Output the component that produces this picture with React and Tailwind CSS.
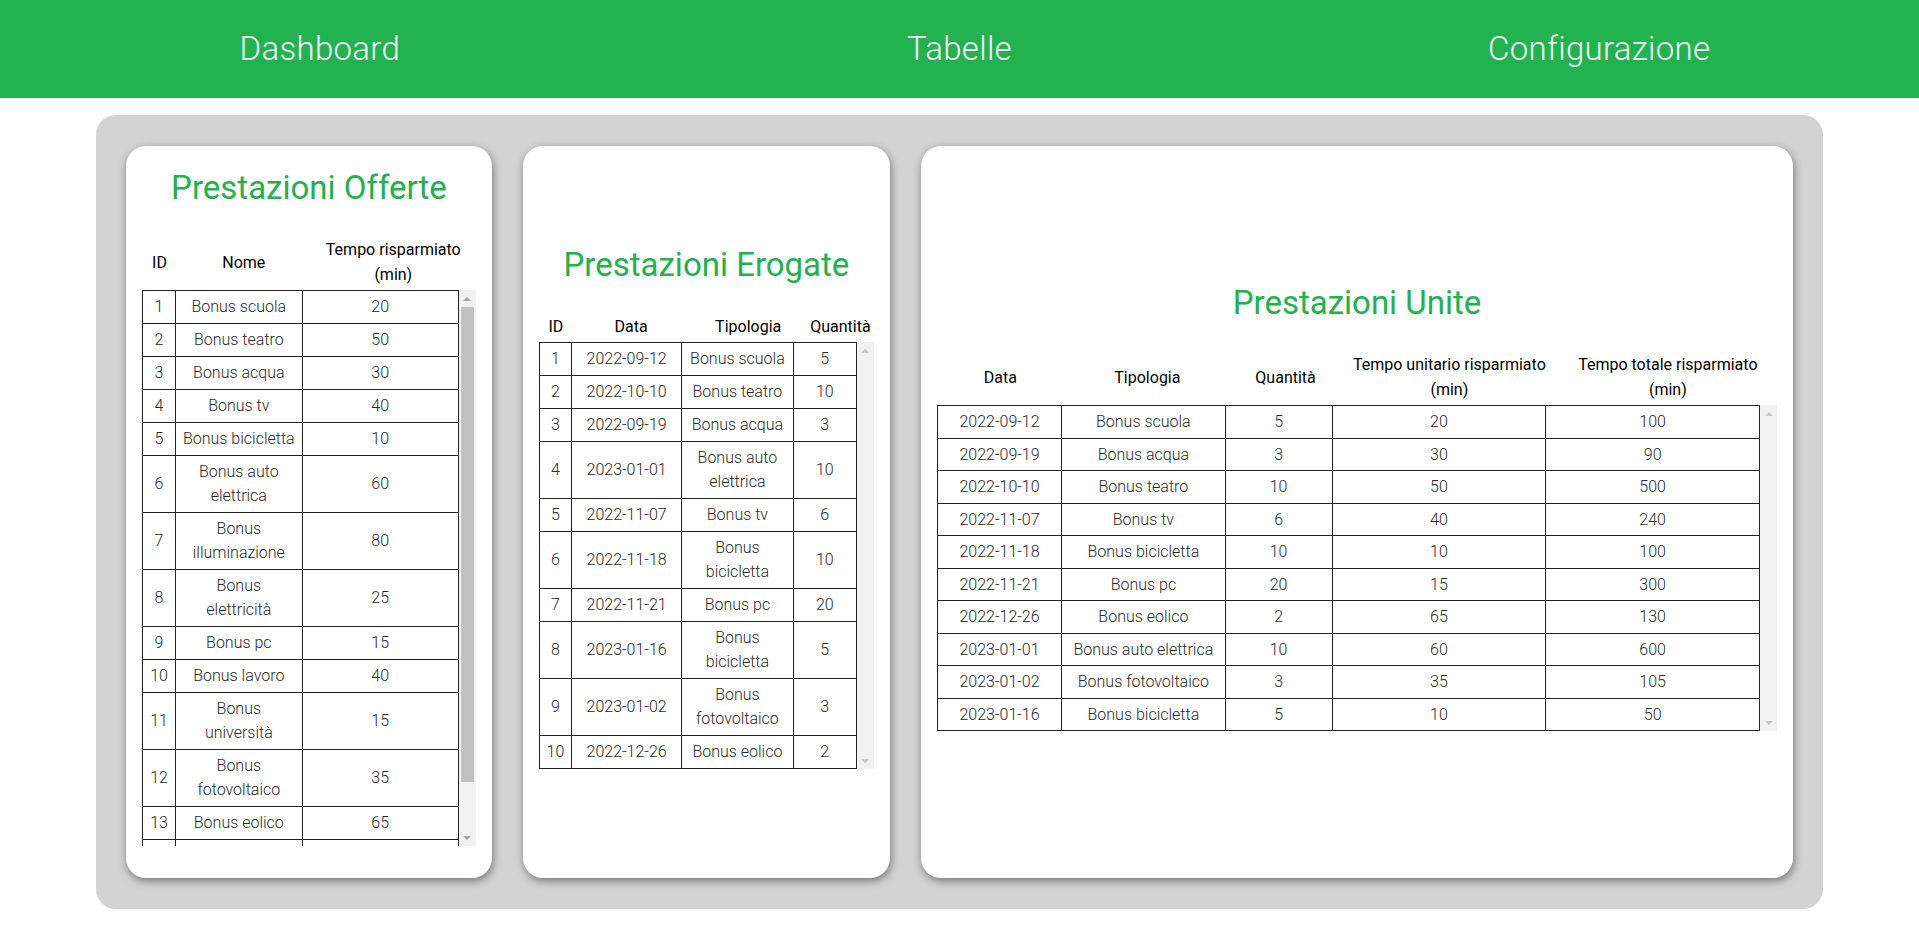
import React from "react";

const offerte = [
  [1, "Bonus scuola", 20],
  [2, "Bonus teatro", 50],
  [3, "Bonus acqua", 30],
  [4, "Bonus tv", 40],
  [5, "Bonus bicicletta", 10],
  [6, "Bonus auto\nelettrica", 60],
  [7, "Bonus\nilluminazione", 80],
  [8, "Bonus\nelettricità", 25],
  [9, "Bonus pc", 15],
  [10, "Bonus lavoro", 40],
  [11, "Bonus\nuniversità", 15],
  [12, "Bonus\nfotovoltaico", 35],
  [13, "Bonus eolico", 65],
  ["\u00a0", "\u00a0", "\u00a0"],
];

const erogate = [
  [1, "2022-09-12", "Bonus scuola", 5],
  [2, "2022-10-10", "Bonus teatro", 10],
  [3, "2022-09-19", "Bonus acqua", 3],
  [4, "2023-01-01", "Bonus auto\nelettrica", 10],
  [5, "2022-11-07", "Bonus tv", 6],
  [6, "2022-11-18", "Bonus\nbicicletta", 10],
  [7, "2022-11-21", "Bonus pc", 20],
  [8, "2023-01-16", "Bonus\nbicicletta", 5],
  [9, "2023-01-02", "Bonus\nfotovoltaico", 3],
  [10, "2022-12-26", "Bonus eolico", 2],
];

const unite = [
  ["2022-09-12", "Bonus scuola", 5, 20, 100],
  ["2022-09-19", "Bonus acqua", 3, 30, 90],
  ["2022-10-10", "Bonus teatro", 10, 50, 500],
  ["2022-11-07", "Bonus tv", 6, 40, 240],
  ["2022-11-18", "Bonus bicicletta", 10, 10, 100],
  ["2022-11-21", "Bonus pc", 20, 15, 300],
  ["2022-12-26", "Bonus eolico", 2, 65, 130],
  ["2023-01-01", "Bonus auto elettrica", 10, 60, 600],
  ["2023-01-02", "Bonus fotovoltaico", 3, 35, 105],
  ["2023-01-16", "Bonus bicicletta", 5, 10, 50],
];

function Lines({ text }) {
  const parts = String(text).split("\n");
  return parts.map((p, i) => (
    <React.Fragment key={i}>
      {i > 0 && <br />}
      {p}
    </React.Fragment>
  ));
}

function Cols({ widths }) {
  return (
    <colgroup>
      {widths.map((w, i) => (
        <col key={i} className={w} />
      ))}
    </colgroup>
  );
}

function HeaderTable({ widths, labels }) {
  return (
    <table className="w-full table-fixed border-collapse">
      <Cols widths={widths} />
      <tbody>
        <tr>
          {labels.map((l, i) => (
            <th
              key={i}
              className="pt-[2px] pb-[3px] text-center align-middle font-normal text-[16px] leading-[25px] text-black whitespace-nowrap"
            >
              <Lines text={l} />
            </th>
          ))}
        </tr>
      </tbody>
    </table>
  );
}

function BodyTable({ widths, rows, pad }) {
  return (
    <table className="w-full table-fixed border-collapse">
      <Cols widths={widths} />
      <tbody>
        {rows.map((r, i) => (
          <tr key={i}>
            {r.map((c, j) => (
              <td
                key={j}
                className={
                  "border border-[#222] px-[2px] text-center align-middle text-[16px] leading-6 text-[#2a2a2a] font-light whitespace-nowrap " +
                  pad
                }
              >
                <Lines text={c} />
              </td>
            ))}
          </tr>
        ))}
      </tbody>
    </table>
  );
}

function Scrollbar({ thumb }) {
  return (
    <div className="w-[17px] shrink-0 bg-[#f1f1f1] flex flex-col">
      <div className="h-[17px] flex items-center justify-center">
        <div
          className={
            "w-0 h-0 border-x-[4px] border-x-transparent border-b-[4px] " +
            (thumb ? "border-b-[#a3a3a3]" : "border-b-[#c5c5c5]")
          }
        />
      </div>
      <div className="flex-1 px-[2px]">
        {thumb && <div className="h-[475px] bg-[#c1c1c1]" />}
      </div>
      <div className="h-[17px] flex items-center justify-center">
        <div
          className={
            "w-0 h-0 border-x-[4px] border-x-transparent border-t-[4px] " +
            (thumb ? "border-t-[#a3a3a3]" : "border-t-[#c5c5c5]")
          }
        />
      </div>
    </div>
  );
}

function Card({ className, title, widths, labels, rows, bodyClass, thumb, pad }) {
  return (
    <div
      className={
        "h-[732px] bg-white rounded-[20px] shadow-[1px_3px_8px_rgba(0,0,0,0.45)] flex flex-col justify-center px-4 pb-[14px] " +
        className
      }
    >
      <h2 className="text-center text-[33px] leading-[48px] text-[#22b14c] font-normal">
        {title}
      </h2>
      <div className="mt-[23.5px]">
        <HeaderTable widths={widths} labels={labels} />
      </div>
      <div className="flex">
        <div className={"flex-1 overflow-hidden " + bodyClass}>
          <BodyTable widths={widths} rows={rows} pad={pad} />
        </div>
        <Scrollbar thumb={thumb} />
      </div>
    </div>
  );
}

export default function App() {
  return (
    <div className="min-h-[933px] bg-white font-[Roboto,'Liberation_Sans',sans-serif]">
      <nav className="h-[98px] bg-[#22b24f] flex items-center">
        {["Dashboard", "Tabelle", "Configurazione"].map((t) => (
          <div
            key={t}
            className="flex-1 text-center text-[33px] font-light text-[#f4fff6] tracking-[0.3px]"
          >
            {t}
          </div>
        ))}
      </nav>
      <main className="mt-[17px] mx-auto w-[90%] bg-[#d3d3d3] rounded-[20px] px-[30px] py-[31px] flex gap-[31px]">
        <Card
          className="w-[366px]"
          title="Prestazioni Offerte"
          widths={["w-[10.5%]", "w-[40%]", "w-[49.5%]"]}
          labels={["ID", "Nome", "Tempo risparmiato\n(min)"]}
          rows={offerte}
          bodyClass="h-[556px]"
          pad="py-[4px]"
          thumb
        />
        <Card
          className="w-[367px]"
          title="Prestazioni Erogate"
          widths={["w-[10.1%]", "w-[34.8%]", "w-[35.1%]", "w-[20%]"]}
          labels={["ID", "Data", "Tipologia", "Quantità"]}
          rows={erogate}
          bodyClass=""
          pad="py-[4px]"
        />
        <Card
          className="flex-1"
          title="Prestazioni Unite"
          widths={["w-[15.1%]", "w-[19.9%]", "w-[13%]", "w-[26%]", "w-[26%]"]}
          labels={[
            "Data",
            "Tipologia",
            "Quantità",
            "Tempo unitario risparmiato\n(min)",
            "Tempo totale risparmiato\n(min)",
          ]}
          rows={unite}
          bodyClass=""
          pad="py-[3.75px]"
        />
      </main>
    </div>
  );
}
